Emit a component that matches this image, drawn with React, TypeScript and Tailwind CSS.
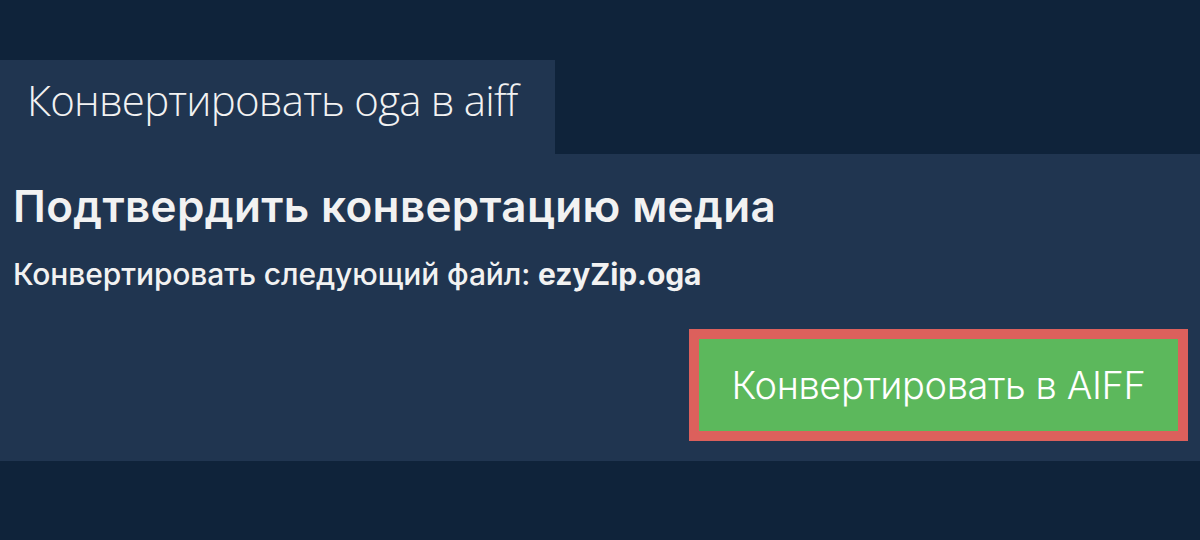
import React from 'react';

const App = () => {
  return (
    <div className="w-[1200px] h-[540px] bg-[#0f233a] overflow-hidden">
      <div className="pt-[60px]">
        {/* Tab */}
        <div className="w-[555px] h-[94px] bg-[#203550] pl-[27px] pt-[11px]">
          <h2
            className="text-[42px] font-light text-[#f2f2f2] leading-[57px] tracking-[-0.8px] whitespace-nowrap"
            style={{ fontFamily: '"Open Sans", sans-serif' }}
          >
            Конвертировать oga в aiff
          </h2>
        </div>

        {/* Panel */}
        <div
          className="h-[307px] bg-[#203550] pl-[13px] pr-3 pt-[26px] flex flex-col"
          style={{ fontFamily: 'Inter, sans-serif' }}
        >
          <h1 className="text-[44px] font-semibold text-[#f2f2f2] leading-[52px] tracking-[0.35px] whitespace-nowrap">
            Подтвердить конвертацию медиа
          </h1>
          <p className="mt-[24px] text-[30px] font-medium text-[#f2f2f2] leading-[36px] tracking-[-0.1px] whitespace-nowrap">
            Конвертировать следующий файл: <b className="font-bold">ezyZip.oga</b>
          </p>
          <div className="mt-auto mb-[20px] flex justify-end">
            <button className="w-[499px] h-[112px] border-[10px] border-[#dc605c] bg-[#5cb85c] text-white text-[38px] font-light leading-none tracking-[-0.4px]">
              Конвертировать в AIFF
            </button>
          </div>
        </div>
      </div>
    </div>
  );
};

export default App;
